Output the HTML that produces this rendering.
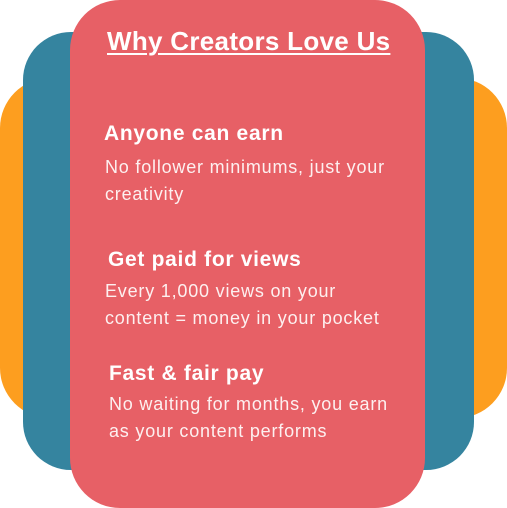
<!DOCTYPE html>
<html><head><style>
html,body{margin:0;padding:0;width:507px;height:508px;overflow:hidden;background:#fff;font-family:"Liberation Sans",sans-serif;}
.o{position:absolute;left:0;top:78px;width:507px;height:340px;background:#fd9e1f;border-radius:50px;}
.b{position:absolute;left:23px;top:32px;width:451px;height:438px;background:#35849f;border-radius:48px;}
.r{position:absolute;left:70px;top:0;width:355px;height:508px;background:#e76066;border-radius:50px;}
.t{position:absolute;color:#fff;white-space:nowrap;}
h1{position:absolute;left:107px;top:26px;margin:0;font-size:26px;font-weight:bold;color:#fff;text-decoration:underline;text-underline-offset:3px;letter-spacing:0.3px}
.h{font-size:21px;font-weight:bold;letter-spacing:0.7px}
.p{font-size:18px;line-height:27px;color:#fdf0f0;letter-spacing:0.8px}
</style></head><body>
<div class="o"></div><div class="b"></div><div class="r"></div>
<h1>Why Creators Love Us</h1>
<div class="t h" style="left:104px;top:122px">Anyone can earn</div>
<div class="t p" style="left:105px;top:154px">No follower minimums, just your<br>creativity</div>
<div class="t h" style="left:108px;top:248px">Get paid for views</div>
<div class="t p" style="left:105px;top:278px">Every 1,000 views on your<br>content = money in your pocket</div>
<div class="t h" style="left:109px;top:362px">Fast &amp; fair pay</div>
<div class="t p" style="left:109px;top:391px">No waiting for months, you earn<br>as your content performs</div>
</body></html>
